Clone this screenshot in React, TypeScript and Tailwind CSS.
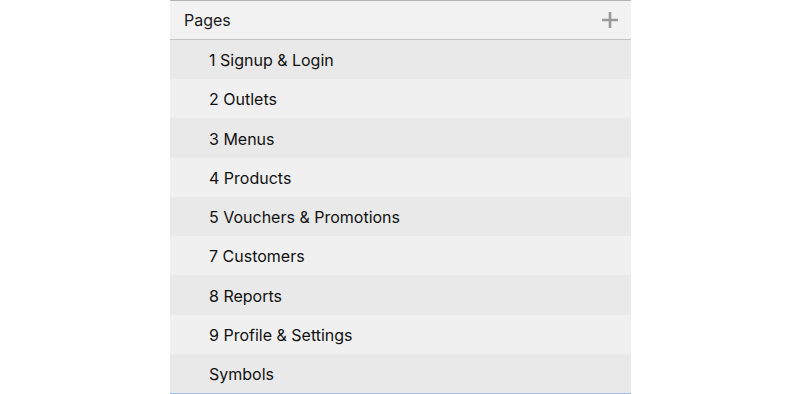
import React from 'react'

const pages = [
  { name: '1 Signup & Login', h: 'h-[39px]', bg: 'bg-[#e9e9e9]' },
  { name: '2 Outlets', h: 'h-[39px]', bg: 'bg-[#f0f0f0]' },
  { name: '3 Menus', h: 'h-[40px]', bg: 'bg-[#e9e9e9]' },
  { name: '4 Products', h: 'h-[39px]', bg: 'bg-[#f0f0f0]' },
  { name: '5 Vouchers & Promotions', h: 'h-[39px]', bg: 'bg-[#e9e9e9]' },
  { name: '7 Customers', h: 'h-[39px]', bg: 'bg-[#f0f0f0]' },
  { name: '8 Reports', h: 'h-[40px]', bg: 'bg-[#e9e9e9]' },
  { name: '9 Profile & Settings', h: 'h-[39px]', bg: 'bg-[#f0f0f0]' },
  { name: 'Symbols', h: 'h-[39px]', bg: 'bg-[#e9e9e9]' },
]

const App: React.FC = () => {
  return (
    <div className="w-[800px] h-[394px] bg-white flex justify-center" style={{ fontFamily: 'Inter, "Liberation Sans", Arial, sans-serif' }}>
      <div className="w-[461px] ml-[1px] flex flex-col">
        {/* header */}
        <div className="h-[40px] bg-[#f2f2f2] border-t border-b border-t-[#b3b3b3] border-b-[#c2c2c2] flex items-center justify-between pl-[14px] pr-[12px]">
          <span className="text-[16px] text-[#1a1a1a]">Pages</span>
          <svg width="18" height="18" viewBox="0 0 18 18" aria-hidden="true">
            <path d="M9 1v16M1 9h16" stroke="#9a9a9a" strokeWidth="2.6" />
          </svg>
        </div>

        {/* page list */}
        <div className="flex flex-col border-b border-[#9dbde8]">
          {pages.map((p) => (
            <div key={p.name} className={`${p.h} ${p.bg} flex items-center pl-[39px] pt-[1px]`}>
              <span className="text-[16px] text-[#111]">{p.name}</span>
            </div>
          ))}
        </div>
      </div>
    </div>
  )
}

export default App
